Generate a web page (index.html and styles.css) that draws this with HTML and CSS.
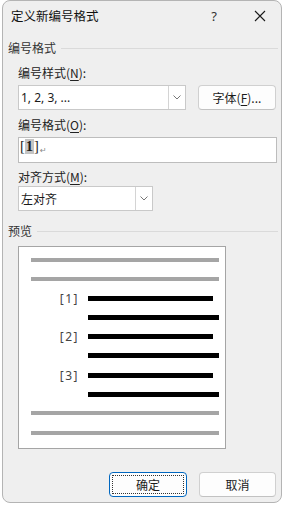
FILE: index.html
```html
<!DOCTYPE html>
<html lang="zh-CN">
<head>
<meta charset="utf-8">
<link rel="stylesheet" href="styles.css">
</head>
<body>
<div class="dialog">
  <div class="titlebar">
    <div class="title">定义新编号格式</div>
    <div class="tb-help">?</div>
    <div class="tb-close">
      <svg width="12" height="12" viewBox="0 0 12 12"><path d="M1 1 L11 11 M11 1 L1 11" stroke="#1a1a1a" stroke-width="1.1" fill="none"/></svg>
    </div>
  </div>
  <div class="content">
    <div class="group-head g1"><span>编号格式</span><i class="rule"></i></div>
    <div class="indent">
      <div class="label l1">编号样式(<u>N</u>):</div>
      <div class="row">
        <div class="combo c1">
          <span class="combo-text latin">1, 2, 3, ...</span>
          <span class="combo-btn"><svg width="8" height="5" viewBox="0 0 8 5"><path d="M0.5 0.5 L4 4 L7.5 0.5" stroke="#777" stroke-width="1" fill="none"/></svg></span>
        </div>
        <div class="btn font-btn">字体(<u>F</u>)...</div>
      </div>
      <div class="label l2">编号格式(<u>O</u>):</div>
      <div class="edit"><span class="br">[</span><span class="num">1</span><span class="br">]</span><span class="ret">↵</span></div>
      <div class="label l3">对齐方式(<u>M</u>):</div>
      <div class="combo c2">
        <span class="combo-text">左对齐</span>
        <span class="combo-btn"><svg width="8" height="5" viewBox="0 0 8 5"><path d="M0.5 0.5 L4 4 L7.5 0.5" stroke="#777" stroke-width="1" fill="none"/></svg></span>
      </div>
    </div>
    <div class="group-head g2"><span>预览</span><i class="rule"></i></div>
    <div class="indent">
      <div class="preview">
        <div class="prow"><span class="plabel"></span><i class="bar gray"></i></div>
        <div class="prow"><span class="plabel"></span><i class="bar gray"></i></div>
        <div class="prow"><span class="plabel">[1]</span><i class="bar black short"></i></div>
        <div class="prow"><span class="plabel"></span><i class="bar black"></i></div>
        <div class="prow"><span class="plabel">[2]</span><i class="bar black short"></i></div>
        <div class="prow"><span class="plabel"></span><i class="bar black"></i></div>
        <div class="prow"><span class="plabel">[3]</span><i class="bar black short"></i></div>
        <div class="prow"><span class="plabel"></span><i class="bar black"></i></div>
        <div class="prow"><span class="plabel"></span><i class="bar gray"></i></div>
        <div class="prow"><span class="plabel"></span><i class="bar gray"></i></div>
      </div>
    </div>
    <div class="footer">
      <div class="btn ok"><span class="focus">确定</span></div>
      <div class="btn cancel">取消</div>
    </div>
  </div>
</div>
</body>
</html>
```
FILE: styles.css
```css
html, body {
  margin: 0;
  padding: 0;
  background: #ffffff;
}
body {
  width: 284px;
  height: 507px;
  overflow: hidden;
  font-family: "Noto Sans CJK SC", "Noto Sans", sans-serif;
  font-size: 12px;
  color: #1b1b1b;
}
.dialog {
  box-sizing: border-box;
  width: 280px;
  height: 503px;
  margin-left: 2px;
  background: #efefef;
  border: 1px solid #b4b4b4;
  border-radius: 8px;
  display: flex;
  flex-direction: column;
}
.titlebar {
  height: 29px;
  display: flex;
  align-items: center;
}
.title {
  flex: 1;
  padding-left: 8px;
  font-size: 12.5px;
  line-height: 16px;
  color: #111;
}
.tb-help {
  width: 30px;
  text-align: center;
  font-family: "Noto Sans", sans-serif;
  font-size: 13px;
  line-height: 16px;
  color: #333;
}
.tb-close {
  width: 30px;
  margin-left: 16px;
  margin-right: 6px;
  height: 16px;
  display: flex;
  align-items: center;
  justify-content: center;
}
.content {
  padding: 0 3px 0 5px;
  display: flex;
  flex-direction: column;
}
.group-head {
  display: flex;
  align-items: center;
  gap: 5px;
  height: 16px;
  line-height: 16px;
  color: #333;
}
.group-head .rule {
  flex: 1;
  height: 1px;
  background: #dadada;
  margin-top: 1px;
}
.g1 { margin-top: 10px; }
.g2 { margin-top: 12px; }
.indent {
  padding-left: 10px;
  display: flex;
  flex-direction: column;
}
.label {
  height: 16px;
  line-height: 16px;
  color: #222;
}
.label u, .btn u { text-decoration-thickness: 1px; text-underline-offset: 2px; }
.l1 { margin-top: 9px; }
.l2 { margin-top: 7px; }
.l3 { margin-top: 6px; }
.row {
  display: flex;
  align-items: center;
  margin-top: 4px;
}
.combo {
  box-sizing: border-box;
  height: 25px;
  background: #fff;
  border: 1px solid #c9c9c9;
  display: flex;
  align-items: stretch;
}
.c1 { width: 168px; }
.c2 { width: 135px; margin-top: 1px; }
.combo-text {
  flex: 1;
  padding-left: 2px;
  display: flex;
  align-items: center;
  color: #1b1b1b;
}
.latin { font-family: "Noto Sans", "Noto Sans CJK SC", sans-serif; font-size: 12px; }
.combo-btn {
  width: 16px;
  border-left: 1px solid #d4d4d4;
  display: flex;
  align-items: center;
  justify-content: center;
}
.btn {
  box-sizing: border-box;
  height: 25px;
  background: #fdfdfd;
  border: 1px solid #d0d0d0;
  border-bottom-color: #c2c2c2;
  border-radius: 4px;
  display: flex;
  align-items: center;
  justify-content: center;
  color: #1b1b1b;
}
.font-btn {
  width: 78px;
  margin-left: 12px;
}
.edit {
  box-sizing: border-box;
  margin-top: 4px;
  height: 26px;
  width: 259px;
  background: #fff;
  border: 1px solid #bdbdbd;
  padding: 1px 0 0 1px;
  display: flex;
  align-items: flex-start;
  font-family: "Liberation Serif", "Noto Sans CJK SC", serif;
  font-size: 14.5px;
  line-height: 15px;
}
.edit .br { color: #222; }
.edit .num {
  background: #c4c4c4;
  font-weight: bold;
  padding: 0 1px;
}
.edit .ret {
  font-family: "DejaVu Sans", sans-serif;
  font-size: 8px;
  color: #888;
  margin-left: 1px;
  margin-top: 4px;
}
.preview {
  box-sizing: border-box;
  margin-top: 7px;
  width: 208px;
  height: 203px;
  background: #fff;
  border: 1px solid #a5a5a5;
  padding-top: 3.4px;
  display: grid;
  grid-auto-rows: 19.2px;
  align-content: start;
}
.prow {
  display: flex;
  align-items: center;
}
.plabel {
  width: 60px;
  text-align: right;
  font-family: "Noto Sans", sans-serif;
  font-size: 12px;
  letter-spacing: 1.5px;
  color: #444;
}
.bar {
  display: block;
  height: 5px;
}
.bar.gray {
  height: 4px;
  background: #a5a5a5;
  margin-left: -48px;
  width: 188px;
}
.bar.black {
  background: #000;
  margin-left: 9px;
  width: 131px;
}
.bar.black.short { width: 125px; }
.footer {
  display: flex;
  justify-content: flex-end;
  gap: 12px;
  margin-top: 23px;
  padding-right: 2px;
}
.ok {
  width: 78px;
  border: 1px solid #0067c0;
  padding: 2px;
}
.ok .focus {
  box-sizing: border-box;
  width: 100%;
  height: 100%;
  border: 1px dotted #333;
  display: flex;
  align-items: center;
  justify-content: center;
}
.cancel { width: 77px; }
```
